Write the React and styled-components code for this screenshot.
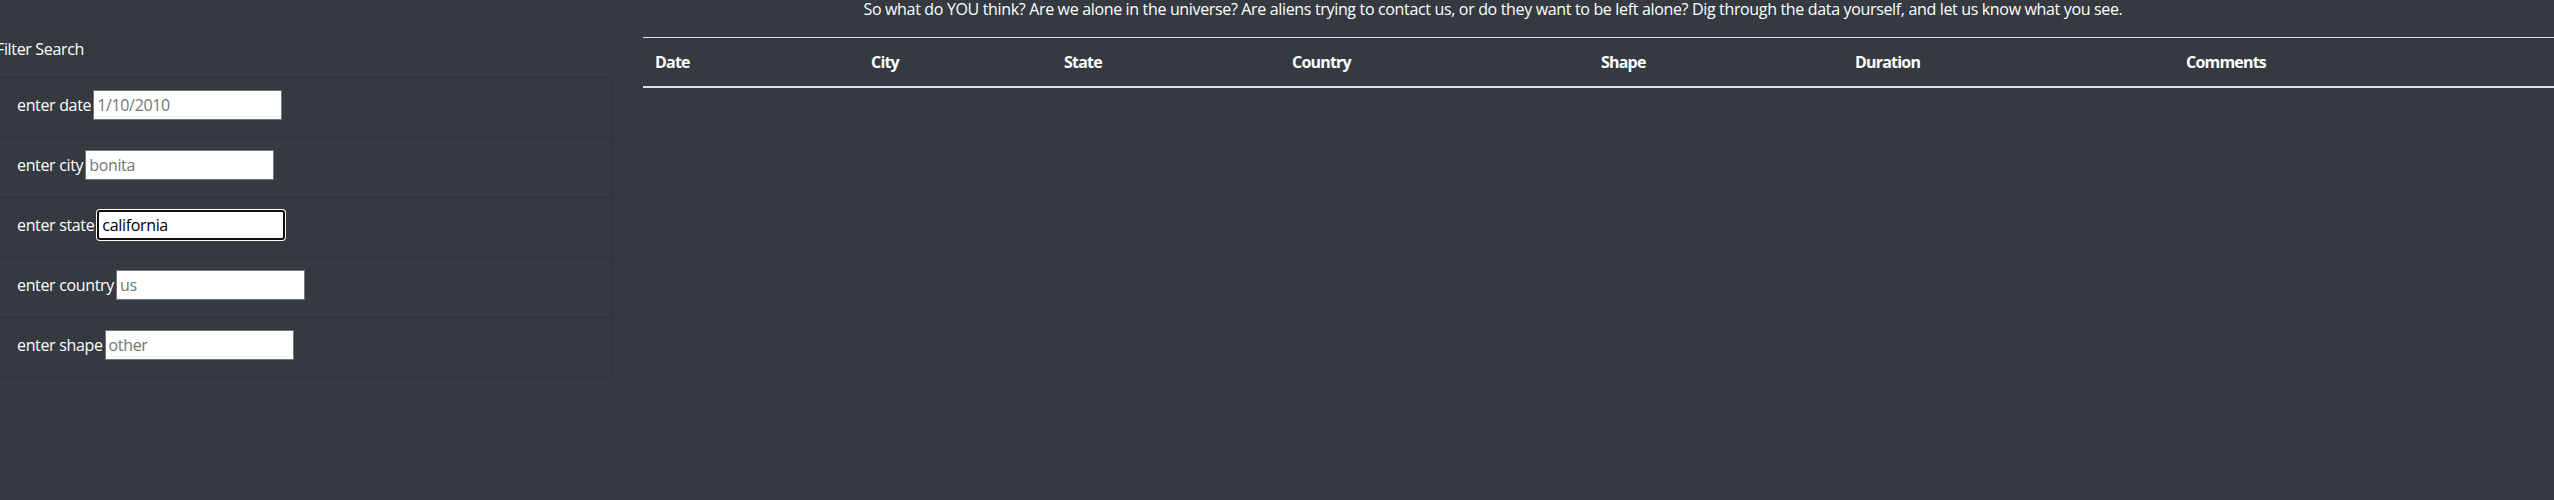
import React from "react";
import styled, { createGlobalStyle } from "styled-components";

const GlobalStyle = createGlobalStyle`
  html, body {
    margin: 0;
    padding: 0;
    background: #343a40;
  }
  body {
    font-family: "Open Sans", "Noto Sans", sans-serif;
    font-size: 16px;
    letter-spacing: -0.34px;
    color: #ffffff;
    overflow: hidden;
  }
  * { box-sizing: border-box; }
`;

const Page = styled.div`
  width: 2554px;
  min-height: 500px;
`;

const Intro = styled.p`
  margin: 0 0 19px 0;
  padding-left: 432px;
  line-height: 18px;
  text-align: center;
  white-space: nowrap;
`;

const Main = styled.div`
  display: flex;
  align-items: flex-start;
`;

const Sidebar = styled.aside`
  flex: 0 0 616px;
  margin-left: -4px;
`;

const SidebarTitle = styled.div`
  line-height: 24px;
  margin-bottom: 16px;
`;

const FilterList = styled.ul`
  list-style: none;
  margin: 0;
  padding: 0;
  border-radius: 4px;
`;

const FilterItem = styled.li`
  display: flex;
  align-items: center;
  gap: 2px;
  padding: 12px 20px 17px;
  border: 1px solid rgba(0, 0, 0, 0.14);
  border-bottom: none;
  line-height: 24px;
  &:first-child {
    border-top-left-radius: 4px;
    border-top-right-radius: 4px;
  }
  &:last-child {
    border-bottom: 1px solid rgba(0, 0, 0, 0.14);
    border-bottom-left-radius: 4px;
    border-bottom-right-radius: 4px;
  }
`;

const FilterLabel = styled.label`
  color: #ffffff;
  white-space: nowrap;
`;

const FilterInput = styled.input`
  width: ${(p) => (p.$focused ? "188px" : "189px")};
  height: 30px;
  padding: 1px 3px;
  font-family: "Open Sans", "Noto Sans", sans-serif;
  font-size: 16px;
  letter-spacing: -0.34px;
  color: #000000;
  background: #ffffff;
  border: ${(p) => (p.$focused ? "2px solid #101010" : "1px solid #767676")};
  border-radius: ${(p) => (p.$focused ? "3px" : "0")};
  box-shadow: ${(p) => (p.$focused ? "0 0 0 1px #ffffff" : "none")};
  outline: none;
  margin-left: ${(p) => (p.$focused ? "1px" : "0")};
  &::placeholder {
    color: #757575;
  }
`;

const TableArea = styled.div`
  flex: 1;
  margin-left: 31px;
`;

const Table = styled.table`
  width: 100%;
  table-layout: fixed;
  border-collapse: separate;
  border-spacing: 0;
`;

const HeadCell = styled.th`
  width: ${(p) => (p.$w ? `${p.$w}px` : "auto")};
  padding: 12px;
  text-align: left;
  vertical-align: bottom;
  font-weight: 700;
  letter-spacing: -0.8px;
  line-height: 24px;
  color: #ffffff;
  border-top: 1px solid #dee2e6;
  border-bottom: 2px solid #dee2e6;
`;

const filters = [
  { id: "date", label: "enter date", placeholder: "1/10/2010" },
  { id: "city", label: "enter city", placeholder: "bonita" },
  { id: "state", label: "enter state", value: "california", focused: true },
  { id: "country", label: "enter country", placeholder: "us" },
  { id: "shape", label: "enter shape", placeholder: "other" },
];

const columns = [
  { name: "Date", w: 216 },
  { name: "City", w: 193 },
  { name: "State", w: 228 },
  { name: "Country", w: 309 },
  { name: "Shape", w: 254 },
  { name: "Duration", w: 331 },
  { name: "Comments" },
];

export default function App() {
  return (
    <Page>
      <GlobalStyle />
      <Intro>
        So what do YOU think? Are we alone in the universe? Are aliens trying to contact us, or do they want to be left alone? Dig through the data yourself, and let us know what you see.
      </Intro>
      <Main>
        <Sidebar>
          <SidebarTitle>Filter Search</SidebarTitle>
          <FilterList>
            {filters.map((f) => (
              <FilterItem key={f.id}>
                <FilterLabel htmlFor={f.id}>{f.label}</FilterLabel>
                <FilterInput
                  id={f.id}
                  type="text"
                  placeholder={f.placeholder}
                  defaultValue={f.value}
                  $focused={f.focused}
                  spellCheck={false}
                />
              </FilterItem>
            ))}
          </FilterList>
        </Sidebar>
        <TableArea>
          <Table>
            <thead>
              <tr>
                {columns.map((c) => (
                  <HeadCell key={c.name} $w={c.w}>
                    {c.name}
                  </HeadCell>
                ))}
              </tr>
            </thead>
            <tbody />
          </Table>
        </TableArea>
      </Main>
    </Page>
  );
}
